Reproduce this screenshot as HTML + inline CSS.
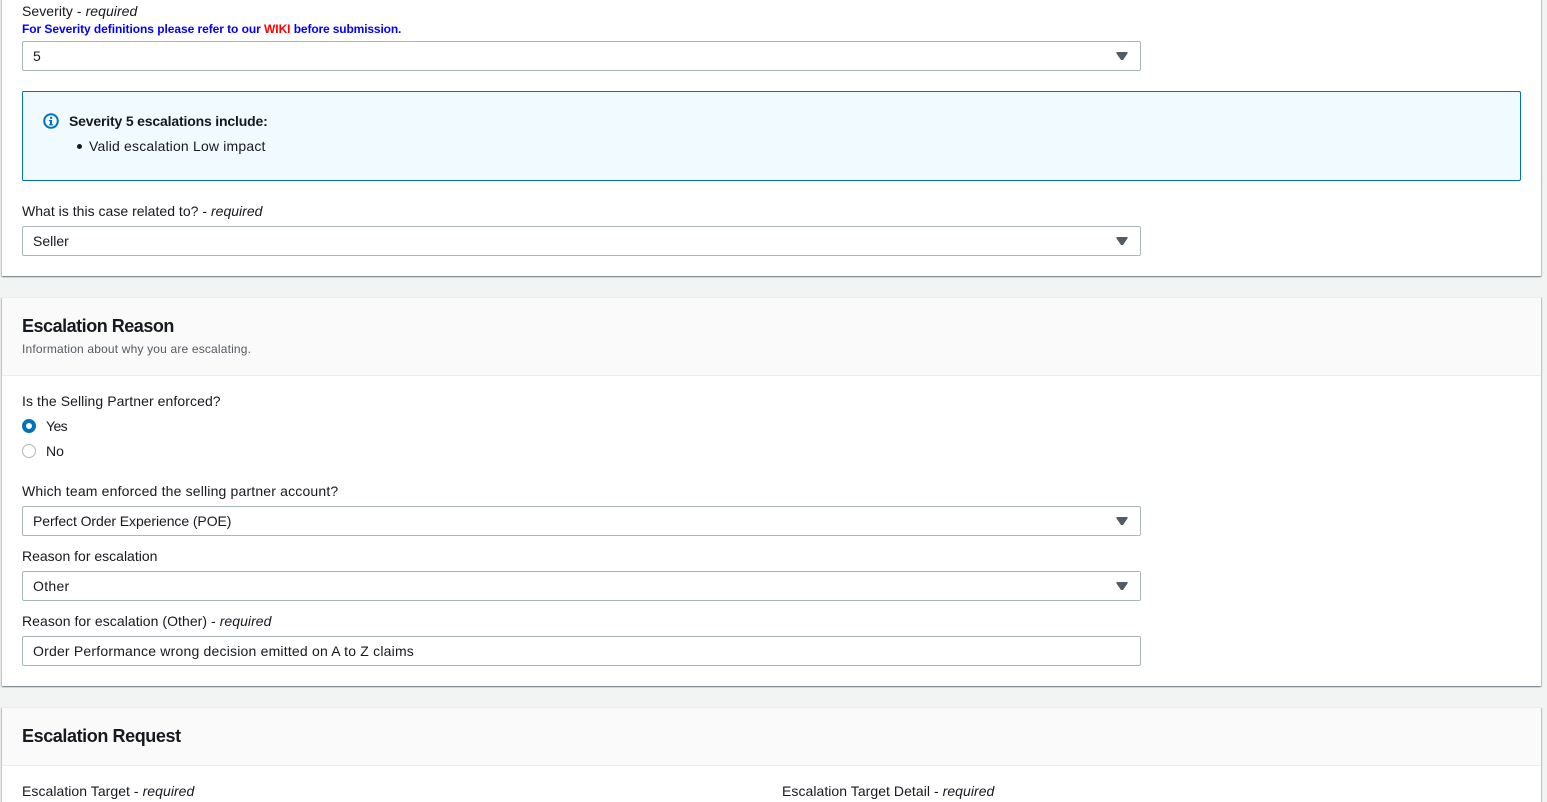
<!DOCTYPE html>
<html><head><meta charset="utf-8"><style>
html,body{margin:0;padding:0;width:1547px;height:802px;overflow:hidden;background:#f2f3f3}
#w{position:relative;width:1547px;height:802px;overflow:hidden;background:#f2f3f3;font-family:"Liberation Sans",sans-serif;color:#16191f;font-size:14px}
.p{position:absolute;left:2px;width:1539px;background:#fff;box-shadow:0 1px 1px 0 rgba(0,28,36,.3),1px 1px 1px 0 rgba(0,28,36,.2),-1px 1px 1px 0 rgba(0,28,36,.2)}
.h{position:absolute;left:2px;width:1539px;background:#fafafa;border-bottom:1px solid #eaeded;box-sizing:border-box;border-top:1px solid #eaeded}
.t{position:absolute;white-space:nowrap;line-height:20px;height:20px}
.s{position:absolute;left:22px;width:1119px;height:30px;box-sizing:border-box;background:#fff;border:1px solid #aab7b8;border-radius:2px}
.a{position:absolute;left:1116px;width:12px;height:8px;display:block}
.h2{font-size:18px;font-weight:bold;letter-spacing:-.48px}
i{font-style:italic}
</style></head><body><div id="w">
<div class="p" style="top:-5px;height:281px"></div>
<div class="p" style="top:297px;height:389px"></div>
<div class="p" style="top:707px;height:120px"></div>
<div class="h" style="top:297px;height:79px"></div>
<div class="h" style="top:707px;height:59px"></div>

<div class="t" style="left:22px;top:1px;letter-spacing:.05px">Severity - <i>required</i></div>
<div class="t" style="left:22px;top:19px;font-size:12px;font-weight:bold;color:#0000ff;letter-spacing:-.06px">For Severity definitions please refer to our <span style="color:#ff0000">WIKI</span> <span style="letter-spacing:-.14px">before submission.</span></div>
<div class="s" style="top:41px"></div><div class="t" style="left:33px;top:46px">5</div><svg class="a" style="top:52px" viewBox="0 0 12 8"><path d="M.5 0h11v1.5L7 8H5L.5 1.5z" fill="#545b64"/></svg>

<div style="position:absolute;left:22px;top:91px;width:1499px;height:90px;box-sizing:border-box;background:#f1faff;border:1px solid #0073bb;border-radius:2px"></div>
<svg style="position:absolute;left:43px;top:113px" width="16" height="16" viewBox="0 0 16 16"><circle cx="8" cy="8" r="6.8" fill="none" stroke="#0073bb" stroke-width="2"/><rect x="7" y="3.8" width="2.2" height="2" fill="#0073bb"/><path d="M6 7h3v4.2h1.2v1.2H5.9v-1.2H7V8.2H6z" fill="#0073bb"/></svg>
<div class="t" style="left:69px;top:111px;font-weight:bold;letter-spacing:-.17px">Severity 5 escalations include:</div>
<div style="position:absolute;left:77px;top:144px;width:5px;height:5px;border-radius:50%;background:#16191f"></div>
<div class="t" style="left:89px;top:136px;letter-spacing:.18px">Valid escalation Low impact</div>

<div class="t" style="left:22px;top:201px;letter-spacing:.02px">What is this case related to? - <i>required</i></div>
<div class="s" style="top:226px"></div><div class="t" style="left:33px;top:231px">Seller</div><svg class="a" style="top:237px" viewBox="0 0 12 8"><path d="M.5 0h11v1.5L7 8H5L.5 1.5z" fill="#545b64"/></svg>

<div class="t h2" style="left:22px;top:316px">Escalation Reason</div>
<div class="t" style="left:22px;top:339px;font-size:12px;color:#545b64;letter-spacing:.17px">Information about why you are escalating.</div>

<div class="t" style="left:22px;top:391px;letter-spacing:.08px">Is the Selling Partner enforced?</div>
<div style="position:absolute;left:22px;top:419px;width:14px;height:14px;box-sizing:border-box;border-radius:50%;border:4px solid #0073bb;background:#fff"></div>
<div class="t" style="left:46px;top:416px;letter-spacing:-.6px">Yes</div>
<div style="position:absolute;left:22px;top:444px;width:14px;height:14px;box-sizing:border-box;border-radius:50%;border:1px solid #aab7b8;background:#fff"></div>
<div class="t" style="left:46px;top:441px">No</div>

<div class="t" style="left:22px;top:481px;letter-spacing:.17px">Which team enforced the selling partner account?</div>
<div class="s" style="top:506px"></div><div class="t" style="left:33px;top:511px;letter-spacing:-.08px">Perfect Order Experience (POE)</div><svg class="a" style="top:517px" viewBox="0 0 12 8"><path d="M.5 0h11v1.5L7 8H5L.5 1.5z" fill="#545b64"/></svg>

<div class="t" style="left:22px;top:546px">Reason for escalation</div>
<div class="s" style="top:571px"></div><div class="t" style="left:33px;top:576px;letter-spacing:.3px">Other</div><svg class="a" style="top:582px" viewBox="0 0 12 8"><path d="M.5 0h11v1.5L7 8H5L.5 1.5z" fill="#545b64"/></svg>

<div class="t" style="left:22px;top:611px;letter-spacing:.05px">Reason for escalation (Other) - <i>required</i></div>
<div class="s" style="top:636px"></div><div class="t" style="left:33px;top:641px;letter-spacing:.2px">Order Performance wrong decision emitted on A to Z claims</div>

<div class="t h2" style="left:22px;top:726px;letter-spacing:-.41px">Escalation Request</div>
<div class="t" style="left:22px;top:781px;letter-spacing:.05px">Escalation Target - <i>required</i></div>
<div class="t" style="left:782px;top:781px;letter-spacing:.05px">Escalation Target Detail - <i>required</i></div>
</div></body></html>
